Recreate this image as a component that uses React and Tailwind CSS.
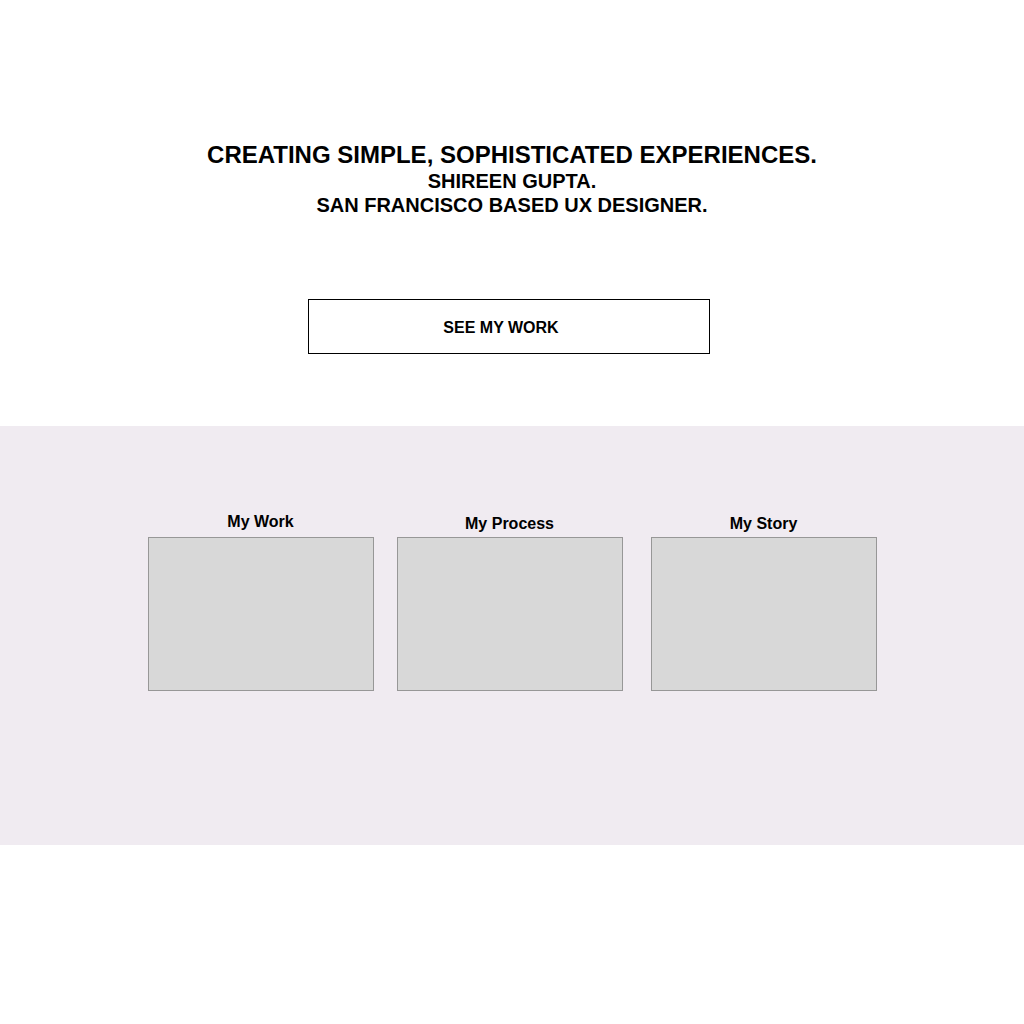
import React from "react";

const cards = [
  { title: "My Work", gap: "", titleMb: "mb-[6px]" },
  { title: "My Process", gap: "ml-[23px]", titleMb: "mb-[4px]" },
  { title: "My Story", gap: "ml-[28px]", titleMb: "mb-[4px]" },
];

const App = () => {
  return (
    <div className="min-h-screen bg-white text-black font-['Liberation_Sans',Arial,sans-serif]">
      {/* Hero */}
      <section className="h-[426px] flex flex-col items-center pt-[141px]">
        <h1 className="text-[24px] leading-[28px] font-bold text-center">
          CREATING SIMPLE, SOPHISTICATED EXPERIENCES.
        </h1>
        <p className="text-[20px] leading-[24px] font-bold text-center">
          SHIREEN GUPTA.
          <br />
          SAN FRANCISCO BASED UX DESIGNER.
        </p>
        <button className="mt-[82px] -ml-[6px] w-[402px] h-[55px] border border-black flex items-center justify-center pr-[16px] pt-[3px] text-[16px] font-bold">
          SEE MY WORK
        </button>
      </section>

      {/* Links */}
      <section className="h-[419px] bg-[#f0ebf1] flex justify-center pt-[86px]">
        <div className="flex items-end h-[179px]">
          {cards.map((c) => (
            <div key={c.title} className={`flex flex-col items-center ${c.gap}`}>
              <h3 className={`text-[16px] leading-[18px] font-bold ${c.titleMb}`}>
                {c.title}
              </h3>
              <div className="w-[226px] h-[154px] bg-[#d8d8d8] border border-[#979797]" />
            </div>
          ))}
        </div>
      </section>
    </div>
  );
};

export default App;
